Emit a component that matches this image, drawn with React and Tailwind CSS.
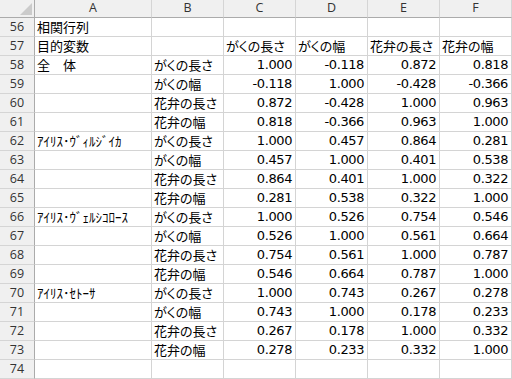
const cols = ["A", "B", "C", "D", "E", "F"];

const rows = [
  { n: 56, a: "相関行列", b: "", v: ["", "", "", ""] },
  { n: 57, a: "目的変数", b: "", v: ["がくの長さ", "がくの幅", "花弁の長さ", "花弁の幅"], text: true },
  { n: 58, a: "全　体", b: "がくの長さ", v: ["1.000", "-0.118", "0.872", "0.818"] },
  { n: 59, a: "", b: "がくの幅", v: ["-0.118", "1.000", "-0.428", "-0.366"] },
  { n: 60, a: "", b: "花弁の長さ", v: ["0.872", "-0.428", "1.000", "0.963"] },
  { n: 61, a: "", b: "花弁の幅", v: ["0.818", "-0.366", "0.963", "1.000"] },
  { n: 62, a: "ｱｲﾘｽ･ｳﾞｨﾙｼﾞｲｶ", b: "がくの長さ", v: ["1.000", "0.457", "0.864", "0.281"] },
  { n: 63, a: "", b: "がくの幅", v: ["0.457", "1.000", "0.401", "0.538"] },
  { n: 64, a: "", b: "花弁の長さ", v: ["0.864", "0.401", "1.000", "0.322"] },
  { n: 65, a: "", b: "花弁の幅", v: ["0.281", "0.538", "0.322", "1.000"] },
  { n: 66, a: "ｱｲﾘｽ･ｳﾞｪﾙｼｺﾛｰｽ", b: "がくの長さ", v: ["1.000", "0.526", "0.754", "0.546"] },
  { n: 67, a: "", b: "がくの幅", v: ["0.526", "1.000", "0.561", "0.664"] },
  { n: 68, a: "", b: "花弁の長さ", v: ["0.754", "0.561", "1.000", "0.787"] },
  { n: 69, a: "", b: "花弁の幅", v: ["0.546", "0.664", "0.787", "1.000"] },
  { n: 70, a: "ｱｲﾘｽ･ｾﾄｰｻ", b: "がくの長さ", v: ["1.000", "0.743", "0.267", "0.278"] },
  { n: 71, a: "", b: "がくの幅", v: ["0.743", "1.000", "0.178", "0.233"] },
  { n: 72, a: "", b: "花弁の長さ", v: ["0.267", "0.178", "1.000", "0.332"] },
  { n: 73, a: "", b: "花弁の幅", v: ["0.278", "0.233", "0.332", "1.000"] },
  { n: 74, a: "", b: "", v: ["", "", "", ""] },
];

const jp = "font-['Noto_Sans_CJK_JP',sans-serif] text-[13px] [font-feature-settings:'palt'] text-black";
const num = "font-['DejaVu_Sans',sans-serif] text-[13px] tracking-[-0.4px] text-black";
const hdr = "font-['Open_Sans',sans-serif] text-[12.5px] text-[#333]";

export default function App() {
  return (
    <div className="w-[512px] h-[379px] overflow-hidden bg-white">
      <div className="grid grid-cols-[35px_117px_72px_72px_72px_72px_72px]">
        <div className="h-[18px] bg-[#f0f0f0] border-r border-b border-[#ababab] relative">
          <svg className="absolute right-[2px] bottom-[2px]" width="12" height="12" viewBox="0 0 12 12">
            <polygon points="12,0 12,12 0,12" fill="#cbcbcb" />
          </svg>
        </div>
        {cols.map((c) => (
          <div
            key={c}
            className={`h-[18px] bg-[#f0f0f0] border-r border-b border-r-[#d5d5d5] border-b-[#ababab] flex items-center justify-center ${hdr}`}
          >
            {c}
          </div>
        ))}
        {rows.map((r) => (
          <div key={r.n} className="contents">
            <div className={`h-[19px] bg-[#f0f0f0] border-r border-b border-r-[#ababab] border-b-[#d5d5d5] flex items-center justify-center ${hdr}`}>
              {r.n}
            </div>
            <div className={`h-[19px] border-r border-b border-[#d4d4d4] flex items-center pl-[2px] whitespace-nowrap ${jp}`}>
              {r.a}
            </div>
            <div className={`h-[19px] border-r border-b border-[#d4d4d4] flex items-center pl-[2px] whitespace-nowrap ${jp}`}>
              {r.b}
            </div>
            {r.v.map((v, i) => (
              <div
                key={i}
                className={`h-[19px] border-r border-b border-[#d4d4d4] flex items-center whitespace-nowrap ${
                  r.text ? `pl-[2px] ${jp}` : `justify-end pr-[3px] ${num}`
                }`}
              >
                {v}
              </div>
            ))}
          </div>
        ))}
      </div>
    </div>
  );
}
